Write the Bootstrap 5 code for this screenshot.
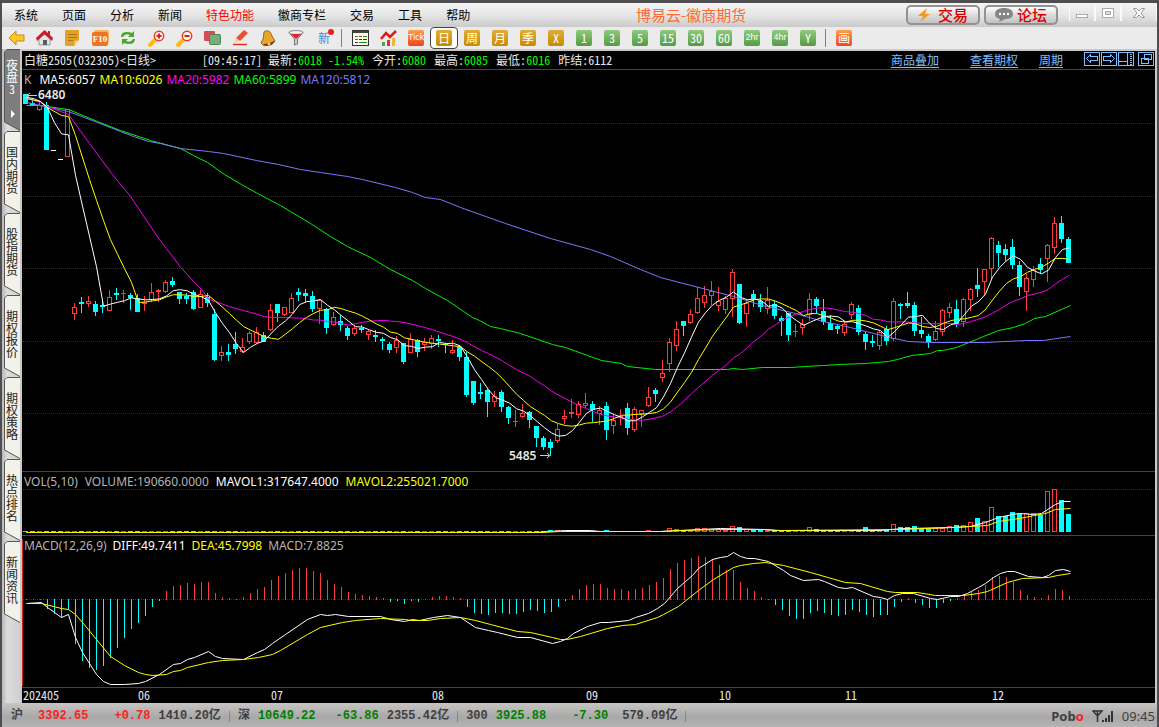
<!DOCTYPE html>
<html lang="zh-CN">
<head>
<meta charset="utf-8">
<meta name="viewport" content="width=device-width, initial-scale=1">
<title>博易云-徽商期货</title>
<link href="https://cdn.jsdelivr.net/npm/bootstrap@5.3.0/dist/css/bootstrap.min.css" rel="stylesheet">
<style>
  body { font: 12px/16px "Noto Sans CJK SC", sans-serif; background: #cdc8c8; }
  button { font: inherit; color: inherit; border: 0; background: none; padding: 0; }
  .hw { font-feature-settings: "hwid"; }
  .frame { border: 2px solid #4e4e50; border-top-width: 3px; border-bottom-width: 2px; }
  .menubar { height: 24px; background: linear-gradient(#f4f4f4, #e6e6e6 50%, #cacaca); color: #000; }
  .menubar .menu-item { padding: 0 12px; }
  .menubar .menu-hot { color: #f00; }
  .app-title { left: 634px; top: 2px; font-size: 15px; line-height: 20px; color: #ff6a33; }
  .pill { width: 74px; height: 20px; border: 2px solid #929292; border-radius: 5px; background: linear-gradient(#fdfdfd, #dcdcdc 50%, #c2c2c2); color: #d80000; font-size: 15px; line-height: 16px; font-weight: 500; }
  .win-buttons { margin-left: 11px; }
  .win { width: 26px; height: 16px; border-left: 1px solid #fafafa; border-right: 1px solid #fafafa; }
  .win-close { width: 36px; }
  .toolbar { height: 22px; background: #ebebeb; }
  .tool { width: 28px; height: 22px; flex: none; }
  .tool.on { background: #fff; border: 1px solid #444; border-radius: 4px; }
  .tool-new { color: #3b8bd8; }
  .tool-new svg { left: 18px; top: 2px; }
  .tool-sep { width: 8px; flex: none; }
  .tool-sep::before { content: ""; display: block; width: 1px; height: 18px; margin: 2px 0 0 3px; background: #808080; }
  .key { width: 16px; height: 16px; border-radius: 2px; color: #fff; font-size: 12px; line-height: 15px; text-align: center; overflow: hidden; }
  .key-long { font-family: "Liberation Sans Narrow", "Liberation Sans", sans-serif; font-size: 9px; }
  .gold { background: linear-gradient(#e0ac38, #c88a00); }
  .green { background: linear-gradient(#8ecb7c, #559a45); }
  .hot { background: linear-gradient(#ffa04a, #ee4420); }
  .main { background: #cdc8c8; }
  .tabs { width: 18px; background: linear-gradient(90deg, #b8b8b8, #dcdcdc 30%, #d0cfd2); }
  .side { width: 16px; height: 82px; margin-left: 2px; color: #222; line-height: 12px; position: relative; }
  .side svg { position: absolute; inset: 0; }
  .side span { position: absolute; left: 2px; top: 15px; width: 12px; }
  .side-on { color: #fff; }
  .side-on span { top: 10px; }
  .chart-area { min-width: 0; background: #000; margin: 2px 2px 0; color: #e8e8e8; }
  .quote { height: 19px; border-bottom: 1px solid #b81414; line-height: 18px; padding-left: 2px; white-space: pre; }
  .quote .q-time { margin-left: 46px; }
  .quote a { color: #7fbfff; text-underline-offset: 2px; margin-right: 21px; }
  .quote a:first-child { margin-right: 31px; }
  .up-g { color: #0f0; }
  .pane { position: relative; border-bottom: 1px solid #b81414; }
  .pane svg { display: block; width: 100%; }
  .legend { position: absolute; left: 2px; top: 1px; font: 12px/18px "Noto Sans", sans-serif; white-space: nowrap; color: #b4b4b4; display: flex; gap: 4px; }
  .pane-v .legend { gap: 7px; }
  .pane-m .legend { gap: 6px; }
  .c-y { color: #ff0; }
  .c-m { color: #f0f; }
  .c-b { color: #7878ff; }
  .pane-k { height: 402px; flex: 1 0 auto; }
  .pane-v { height: 64px; }
  .pane-m { height: 152px; }
  .axis { height: 15px; line-height: 14px; position: relative; }
  .axis span { position: absolute; }
  .status { height: 24px; background: linear-gradient(#c8c4c4, #a8a8a8 60%, #b4b4b4); font: bold 12px/16px "Liberation Mono", "Noto Sans CJK SC", monospace; color: #404040; padding: 2px 2px 0 9px; }
  .status .r { color: #ff2020; }
  .status .g { color: #008000; }
  .status .bar { width: 1px; height: 11px; background: #888; margin: 0 8px; }
  .idx { margin-left: 15px; }
  .chg { margin-left: 26px; }
  .chg-wide { margin-left: 20px; }
  .amt { margin-left: 14px; }
  .brand { font: bold 13px/16px "Noto Sans", sans-serif; }
  .clock { font: 13px/16px "Noto Sans", sans-serif; }
</style>
</head>
<body>
<div class="frame min-vh-100 d-flex flex-column">

  <header class="menubar d-flex align-items-center position-relative">
    <nav class="d-flex" aria-label="主菜单">
      <button class="menu-item">系统</button><button class="menu-item">页面</button><button class="menu-item">分析</button><button class="menu-item">新闻</button><button class="menu-item menu-hot">特色功能</button><button class="menu-item">徽商专栏</button><button class="menu-item">交易</button><button class="menu-item">工具</button><button class="menu-item">帮助</button>
    </nav>
    <div class="app-title position-absolute">博易云-徽商期货</div>
    <div class="d-flex ms-auto align-items-start">
      <button class="pill d-flex align-items-center justify-content-center gap-2 me-1">
        <svg width="12" height="14" viewBox="0 0 12 14"><path d="M9 0 0 8h5L2 14l10-8H7z" fill="#f79a1c"/></svg>交易</button>
      <button class="pill d-flex align-items-center justify-content-center gap-1">
        <svg width="18" height="14" viewBox="0 0 18 14"><path d="M9 0c5 0 9 2 9 6s-4 5-8 5l-6 3 1-3C2 10 0 9 0 6 0 2 4 0 9 0z" fill="#858585"/><circle cx="5" cy="6" r="1.2" fill="#fff"/><circle cx="9" cy="6" r="1.2" fill="#fff"/><circle cx="13" cy="6" r="1.2" fill="#fff"/></svg>论坛</button>
      <div class="d-flex win-buttons">
        <button class="win" aria-label="最小化"><svg class="d-block mx-auto" width="14" height="12" viewBox="0 0 14 12"><rect x="1.5" y="7.5" width="11" height="3" fill="#fff" stroke="#aaa"/></svg></button>
        <button class="win" aria-label="最大化"><svg class="d-block mx-auto" width="14" height="12" viewBox="0 0 14 12"><rect x="1.5" y="1.5" width="11" height="9" fill="#fff" stroke="#aaa"/><rect x="4.5" y="4.5" width="5" height="3" fill="#ddd" stroke="#aaa"/></svg></button>
        <button class="win win-close" aria-label="关闭"><svg class="d-block mx-auto" width="14" height="12" viewBox="0 0 14 12"><path d="M1.5 1.5h3L7 4l2.500-2.500h3L9 6l3.500 4.500h-3L7 8l-2.500 2.500h-3L5 6z" fill="#fff" stroke="#999"/></svg></button>
      </div>
    </div>
  </header>

  <div class="toolbar d-flex" id="toolbar" role="toolbar" aria-label="工具栏">
    <button class="tool d-flex align-items-center justify-content-center" aria-label="后退"><svg width="17" height="16" viewBox="0 0 17 16"><path d="M1 8l7-7v4h8v6H8v4z" fill="#ffc524" stroke="#c98a18"/></svg></button>
    <button class="tool d-flex align-items-center justify-content-center" aria-label="首页"><svg width="17" height="16" viewBox="0 0 17 16"><path d="M3 8v7h11V8L8.500 3z" fill="#e4e4e4" stroke="#999"/><path d="M0 8 8.500 0 12 3V1h2v4l3 3-1 3L8.500 4.500 1 11z" fill="#c5202c"/><path d="M7 15v-5h4v5z" fill="#5b5b62"/></svg></button>
    <button class="tool d-flex align-items-center justify-content-center" aria-label="公告"><svg width="16" height="16" viewBox="0 0 16 16"><path d="M1 1q0-1 1-1h13v10l-5 6H2q-1 0-1-1z" fill="#e3a128"/><path d="M15 10q-1 1-4 1 0 3-1 5z" fill="#ffe0a0"/><path d="M4 4.500h9M4 7.500h9M4 10.500h5" stroke="#b07412"/></svg></button>
    <button class="tool d-flex align-items-center justify-content-center" aria-label="F10"><svg width="17" height="16" viewBox="0 0 17 16"><rect x="2" y="0" width="15" height="13" rx="2" fill="#f7b25e"/><rect x="0" y="2" width="16" height="14" rx="2" fill="#ef7420"/><text x="8" y="12" font-family="Liberation Serif" font-weight="bold" font-size="9" fill="#fff" text-anchor="middle">F10</text></svg></button>
    <button class="tool d-flex align-items-center justify-content-center" aria-label="刷新"><svg width="16" height="16" viewBox="0 0 16 16" fill="#4da52c"><path d="M1 7q0-5 6-5 3 0 5 1l2-2v6H8l2-2q-5-2-7 2zM15 9q0 5-6 5-3 0-5-1l-2 2V9h6l-2 2q5 2 7-2z"/></svg></button>
    <button class="tool d-flex align-items-center justify-content-center" aria-label="放大"><svg width="17" height="17" viewBox="0 0 17 17"><path d="M2 15l5-5" stroke="#ffb818" stroke-width="4" stroke-linecap="round"/><circle cx="11" cy="6" r="4.7" fill="#fff4ee" stroke="#e04328" stroke-width="1.5"/><path d="M8.500 6h5M11 3.500v5" stroke="#d82020" stroke-width="2"/></svg></button>
    <button class="tool d-flex align-items-center justify-content-center" aria-label="缩小"><svg width="17" height="17" viewBox="0 0 17 17"><path d="M2 15l5-5" stroke="#ffb818" stroke-width="4" stroke-linecap="round"/><circle cx="11" cy="6" r="4.7" fill="#fff4ee" stroke="#e04328" stroke-width="1.5"/><path d="M8.500 6h5" stroke="#d82020" stroke-width="2"/></svg></button>
    <button class="tool d-flex align-items-center justify-content-center" aria-label="叠加"><svg width="17" height="16" viewBox="0 0 17 16"><rect x="0" y="1" width="11" height="10" rx="1" fill="#d94b52"/><rect x="5.5" y="4.5" width="11" height="10" rx="1" fill="#79ad79" stroke="#4f844f"/></svg></button>
    <button class="tool d-flex align-items-center justify-content-center" aria-label="画线"><svg width="17" height="16" viewBox="0 0 17 16"><path d="M4 8l8-8 4 3-8 8z" fill="#e8502c"/><path d="M4 8l4 3-6 2z" fill="#f3cfa4"/><path d="M1 14.500h14" stroke="#e03018" stroke-width="1.5"/></svg></button>
    <button class="tool d-flex align-items-center justify-content-center" aria-label="预警"><svg width="16" height="17" viewBox="0 0 16 17"><path d="M4 2c4-3 7 0 8 4l3 5-11 5-3-3q3-4 3-11z" fill="#e6a52e" stroke="#a4621a"/><path d="M3 14q7 0 12-3-2 5-9 5z" fill="#7a3412"/><circle cx="9" cy="14" r="1.5" fill="#ffc860"/></svg></button>
    <button class="tool d-flex align-items-center justify-content-center" aria-label="筛选"><svg width="16" height="16" viewBox="0 0 16 16"><path d="M1 2.500 6.500 9v6l3-1V9L15 2.500z" fill="#ccc" stroke="#777"/><ellipse cx="8" cy="2.5" rx="7" ry="2" fill="#eee" stroke="#888"/><path d="M3 4h10L8 9z" fill="#dc2233"/></svg></button>
    <button class="tool tool-new position-relative">新<svg class="position-absolute" width="6" height="6"><circle cx="3" cy="3" r="3" fill="#f81818"/></svg></button>
    <span class="tool-sep"></span>
    <button class="tool d-flex align-items-center justify-content-center" aria-label="报价"><svg width="17" height="16" viewBox="0 0 17 16"><rect x=".5" y=".5" width="16" height="15" fill="#fffde6" stroke="#333"/><path d="M1 2h15" stroke="#444" stroke-width="2"/><path d="M3 6.500h3M11 6.500h4" stroke="#1c8c1c"/><path d="M7 6.500h3M3 9.500h3" stroke="#d22"/><path d="M7 9.500h3M11 9.500h4M3 12.500h3" stroke="#22a"/><path d="M7 12.500h8" stroke="#1c8c1c"/></svg></button>
    <button class="tool d-flex align-items-center justify-content-center" aria-label="走势"><svg width="17" height="16" viewBox="0 0 17 16"><path d="M1 9l5-6 4 4 6-6" fill="none" stroke="#e01818" stroke-width="2.5"/><path d="M2 16v-4h3v4z" fill="#55a055"/><path d="M7 16v-6h3v6z" fill="#d33"/><path d="M12 16V8h3v8z" fill="#eeb83a"/></svg></button>
  </div>

  <main class="main d-flex flex-grow-1">
    <aside class="tabs flex-shrink-0" id="tabs"></aside>
    <section class="chart-area flex-grow-1 d-flex flex-column">
      <div class="quote hw d-flex"><span>白糖2505(032305)&lt;日线&gt;</span><span class="q-time">[09:45:17] 最新:<span class="up-g">6018 -1.54%</span></span><span class="ms-2">今开:<span class="up-g">6080</span></span><span class="ms-2">最高:<span class="up-g">6085</span></span><span class="ms-2">最低:<span class="up-g">6016</span></span><span class="ms-2">昨结:6112</span>
        <div class="d-flex ms-auto"><a href="#">商品叠加</a><a href="#">查看期权</a><a href="#">周期</a><svg width="71" height="18" viewBox="0 0 71 18" fill="none" stroke="#7fbfff" shape-rendering="crispEdges" role="img" aria-label="窗口工具"><path d="M.5 1.500h15v13H.5zM17.500 1.500h15v13h-15zM34.500 1.500h15v13h-15zM54.500 1.500h15v13h-15z"/><path d="M2.500 7.500l4-4v2h7v4h-7v2zM30.500 7.500l-4-4v2h-7v4h7v2zM34.500 10.500h9M43.500 2v12"/><path d="M47 3v11" stroke-width="2" stroke-dasharray="1 1"/><path d="M60.500 3.500h7v5h-7zM57.500 7.500h7v5h-7z"/></svg></div>
      </div>
      <div class="pane pane-k">
        <svg height="400" id="kPane" aria-label="K线图"></svg>
        <div class="legend"><span class="me-1">K</span><span class="text-white">MA5:6057</span><span class="c-y">MA10:6026</span><span class="c-m">MA20:5982</span><span class="up-g">MA60:5899</span><span class="c-b">MA120:5812</span></div>
      </div>
      <div class="pane pane-v">
        <svg height="63" id="vPane" aria-label="成交量"></svg>
        <div class="legend"><span>VOL(5,10)</span><span>VOLUME:190660.0000</span><span class="text-white">MAVOL1:317647.4000</span><span class="c-y">MAVOL2:255021.7000</span></div>
      </div>
      <div class="pane pane-m">
        <svg height="151" id="mPane" aria-label="MACD"></svg>
        <div class="legend"><span>MACD(12,26,9)</span><span class="text-white">DIFF:49.7411</span><span class="c-y">DEA:45.7998</span><span>MACD:7.8825</span></div>
      </div>
      <div class="axis hw" id="axis"></div>
    </section>
  </main>

  <footer class="status d-flex align-items-center">
    <span>沪</span><span class="r idx">3392.65</span><span class="r chg">+0.78</span><span class="ms-2">1410.20亿</span>
    <span class="bar"></span><span>深</span><span class="g ms-2">10649.22</span><span class="g chg-wide">-63.86</span><span class="ms-2">2355.42亿</span>
    <span class="bar"></span><span>300</span><span class="g ms-2">3925.88</span><span class="g chg">-7.30</span><span class="amt">579.09亿</span><span class="bar"></span>
    <span class="brand ms-auto">Pob<span class="r">o</span></span>
    <svg class="ms-2" width="22" height="13" viewBox="0 0 22 13"><path d="M1 1h9L5.500 6zM5.500 1v11" fill="none" stroke="#333" stroke-width="1.5"/><path d="M11 12v-2M14 12V8M17 12V5M20 12V1" stroke="#333" stroke-width="2"/></svg>
    <span class="clock ms-2">09:45</span>
  </footer>
</div>

<script src="https://cdn.jsdelivr.net/npm/bootstrap@5.3.0/dist/js/bootstrap.bundle.min.js"></script>
<script>
  // Period buttons of the toolbar
  var keys = [['Tick','hot'],['日','gold',1],['周','gold'],['月','gold'],['季','gold'],['X','gold'],['1','green'],['3','green'],['5','green'],['15','green'],['30','green'],['60','green'],['2hr','green'],['4hr','green'],['Y','green'],null,['画','hot']];
  document.getElementById('toolbar').insertAdjacentHTML('beforeend', keys.map(function (k) {
    if (!k) return '<span class="tool-sep"></span>';
    return '<button class="tool d-flex align-items-center justify-content-center' + (k[2] ? ' on' : '') + '"><span class="key hw ' + k[1] + (k[0].length > 2 ? ' key-long' : '') + '">' + k[0] + '</span></button>';
  }).join(''));

  // Side tabs
  document.getElementById('tabs').innerHTML = ['夜盘3','国内期货','股指期货','期权报价','期权策略','热点排名','新闻资讯'].map(function (t, i) {
    var on = i === 0;
    return '<button class="side d-block hw' + (on ? ' side-on' : '') + '"><svg width="16" height="82"><path d="M16 .5H3L.5 3V73L16 81.5z" fill="' + (on ? '#7d7d7d' : '#f2f2ea') + '"/><path d="M16 .5H3L.5 3V73L16 81.5" fill="none" stroke="#555"/>' + (on ? '<path d="M7 61l4 4-4 4z" fill="#fff"/>' : '') + '</svg><span>' + t + '</span></button>';
  }).join('');

  // Candles: high, body top, body bottom, low, c = falling / r = rising / w = flat
  var raw = '94 94 103 103c,98 103 104 105c,101 105 109 110r,102 105 149 149c,150 150 150 150w,159 159 159 159w,109 109 156 156r,303 307 313 319r,297 302 303 312c,296 301 303 306r,301 304 311 315c,299 305 306 312c,290 297 310 310r,288 293 294 299c,290 293 293 302r,293 295 297 309c,294 298 311 311c,296 302 303 310r,283 292 299 301r,289 290 291 301r,280 282 291 292r,277 281 284 286c,292 292 298 303c,293 296 298 303c,290 292 308 309c,290 294 307 307r,293 297 302 306c,309 314 359 360c,346 352 355 360r,344 352 354 360c,332 344 348 353c,338 347 351 352r,331 333 341 343r,327 332 342 343r,332 335 341 341c,304 310 329 330r,304 304 312 321c,307 307 314 315r,293 298 312 312r,288 292 294 300c,289 293 295 301c,291 296 308 311c,299 300 308 323r,308 309 327 333c,312 317 324 325r,315 321 324 330c,326 328 335 339c,325 328 333 335r,325 328 329 332c,329 331 334 339r,330 335 336 341c,337 339 340 349c,342 344 349 352c,336 340 347 352r,343 343 361 363c,333 339 352 352r,339 340 351 356c,338 342 344 350r,335 338 343 348r,335 339 340 346c,343 344 344 352c,340 350 352 353r,346 347 356 360c,352 357 394 396c,381 381 402 404c,383 392 393 398c,389 390 401 416c,391 396 401 406r,390 392 406 411c,406 407 417 423c,410 421 421 426r,404 413 416 417r,411 412 419 427c,426 426 437 446c,436 438 446 449c,439 442 447 455c,424 429 440 442r,410 416 418 423r,399 412 413 417r,401 404 414 417r,393 403 405 407r,401 404 409 421c,406 410 413 424r,402 406 429 439c,415 420 425 433r,409 416 417 424r,403 408 427 434c,407 409 429 431r,410 410 413 426r,387 397 405 406r,388 390 393 401c,360 373 377 381r,338 342 363 371r,321 329 345 350r,321 321 325 335c,309 314 322 323r,287 298 312 313r,286 295 302 307r,281 291 295 304r,287 301 305 310r,296 298 309 313r,269 272 298 316r,284 284 322 323c,300 303 313 326r,290 294 298 306c,294 301 306 311c,287 300 308 313r,301 304 315 318c,316 318 320 335c,313 313 334 340c,324 331 331 336r,319 324 327 334r,293 299 314 320r,297 299 305 312c,299 311 321 324c,315 323 329 329c,324 326 328 333c,321 324 332 335r,302 304 314 318r,305 308 331 334c,332 334 341 349c,335 341 342 346c,330 332 345 349r,326 329 340 344c,298 301 338 340r,303 304 305 318c,292 303 305 307c,302 305 330 335c,317 330 333 337c,334 336 341 347c,321 331 339 340r,309 310 331 335r,303 307 312 317r,300 309 323 326c,298 299 321 326r,288 289 299 310r,268 285 288 296c,269 269 281 295r,237 238 268 279r,241 245 252 266c,244 249 254 260c,239 247 264 268c,261 265 286 295c,274 278 291 310r,266 270 279 286r,258 264 269 273c,244 245 258 281r,217 223 247 253r,216 223 238 242c,237 239 262 262c';
  var k = raw.split(',').map(function (s) {
    var n = s.slice(0, -1).split(' ').map(Number), c = s.slice(-1);
    return { h: n[0], t: n[1], b: n[2], l: n[3], c: c, close: c === 'r' ? n[1] : n[2] };
  });
  var RED = '#ff3c3c', CYAN = '#00ffff', PITCH = 7;
  function cx(i) { return 25 + PITCH * i; }
  function rect(x, y, w, h, f) { return '<rect x="' + x + '" y="' + y + '" width="' + w + '" height="' + h + '" fill="' + f + '"/>'; }
  function box(x, y, w, h) { return '<rect x="' + (x + .5) + '" y="' + (y + .5) + '" width="' + (w - 1) + '" height="' + (h - 1) + '" fill="none" stroke="' + RED + '"/>'; }
  function line(p, c) { return '<polyline transform="translate(.5 .5)" points="' + p + '" fill="none" stroke="' + c + '"/>'; }
  function grid(y, c) { return '<line x1="23" x2="5000" y1="' + (y + .5) + '" y2="' + (y + .5) + '" stroke="' + (c || '#8c0000') + '" stroke-dasharray="1 1"/>'; }
  function ma(n, start) {
    var p = start;
    for (var i = n - 1; i < k.length; i++) {
      var s = 0;
      for (var j = 0; j < n; j++) s += k[i - j].close;
      p += ' ' + (cx(i) + 1) + ',' + (s / n).toFixed(1);
    }
    return p;
  }

  // Price pane
  var s = [123, 196, 268, 341, 413].map(function (y) { return grid(y); }).join('');
  k.forEach(function (d, i) {
    var x = cx(i), h = d.b - d.t + 1;
    if (d.c === 'w') { s += rect(x - 2, d.t, 5, 1, '#fff'); return; }
    if (d.c === 'c') s += rect(x, d.h, 1, d.l - d.h + 1, CYAN) + rect(x - 2, d.t, 5, h, CYAN);
    else {
      s += rect(x, d.h, 1, d.t - d.h, RED) + rect(x, d.b, 1, d.l - d.b + 1, RED);
      s += h > 2 ? box(x - 2, d.t, 5, h) : rect(x - 2, d.t, 5, h, RED);
    }
  });
  s = '<g shape-rendering="crispEdges">' + s + '</g>';
  s += line('26,105 40,105 68,109 97,121 120,130 150,140 180,148 193,155 207,162 224,174 241,184 257,193 280,205 290,211 310,223 330,236 347,246 370,257 390,269 412,280 425,288 447,300 472,317 479,320 490,326 500,328 520,333 552,344 565,347 601,360 621,363 627,366 655,369 727,369 733,368 742,369 762,367 790,367 805,366 823,365 838,364 865,363 888,361 897,359 911,355 930,353 937,350 942,350 956,347 976,339 983,336 998,330 1013,327 1025,323 1034,318 1045,316 1070,305', '#00f000');
  s += line('26,102 68,111 97,122 120,131 133,136 148,141 160,143 180,148 208,151 223,153 256,160 278,164 300,169 320,172 347,176 362,179 395,187 412,192 425,197 440,199 460,207 505,223 550,238 590,249 610,256 640,269 660,277 733,296 762,305 795,313 823,321 850,327 889,337 908,341 930,342 985,342 1025,340 1043,340 1070,336', '#7878ff');
  s += line(ma(20, '26,98 40,102 47,106 68,114 89,143 112,174 130,196'), '#f000f0');
  s += line(ma(10, '26,98 40,101 47,107 61,115 68,116 75,135'), '#ffff00');
  s += line(ma(5, '26,97 33,98 40,101 47,107'), '#ffffff');
  s += '<g fill="#e8e8e8" font-family="Noto Sans" font-weight="600" font-size="12"><text x="38" y="99">6480</text><text x="509" y="460">5485</text></g>';
  s += '<path d="M28 95.500h9M30 93l-3 2.500 3 2.500M540 455.500h9M547 453l3 2.500-3 2.500" fill="none" stroke="#ccc"/>';
  document.getElementById('kPane').innerHTML = '<g transform="translate(-22 -70)">' + s + '</g>';

  // Volume pane: tops of the bars from bar 92 on
  var vt = [528,529,530,530,528,528,529,529,530,526,527,529,530,530,530,530,531,530,530,530,527,529,530,530,530,530,530,530,527,530,530,530,524,527,527,526,529,529,528,528,526,525,525,522,518,521,507,516,516,512,514,513,513,515,491,489,500,514];
  s = grid(489);
  k.forEach(function (d, i) {
    var top = i >= 92 ? vt[i - 92] : ([75, 76, 83, 89].indexOf(i) >= 0 ? 530 : 531), x = cx(i) - 2, h = 532 - top;
    s += d.c === 'r' && h > 2 ? box(x, top, 5, h) : rect(x, top, 5, i < 92 ? 1 : h, d.c === 'r' ? RED : CYAN);
  });
  s = '<g shape-rendering="crispEdges">' + s + '</g>';
  s += line('26,532 535,532 550,531 565,530 590,530 600,531 660,531 720,528 765,529 775,530 880,530 890,529 905,528 955,527 970,526 977,524 985,522 998,517 1012,514 1019,513 1033,514 1041,513 1055,504 1062,501 1070,501', '#fff');
  s += line('26,532 540,532 560,531 660,531 677,530 725,529 765,529 780,530 900,529 950,527 987,525 998,521 1019,518 1034,515 1045,513 1055,509 1070,508', '#ff0');
  document.getElementById('vPane').innerHTML = '<g transform="translate(-22 -472)">' + s + '</g>';

  // MACD pane: end of each histogram bar, zero line at 599
  var mh = [599,599,599,608,613,617,609,643,660,667,669,665,657,647,637,628,622,615,606,600,591,586,585,583,584,582,582,593,597,598,599,597,593,589,587,580,576,573,570,568,568,571,573,580,584,587,592,594,595,596,597,598,601,600,603,600,601,599,597,596,596,597,598,606,612,613,614,612,612,613,613,611,609,610,612,611,606,600,595,589,585,584,584,588,589,589,591,589,588,585,582,578,569,563,560,558,556,557,559,565,570,570,582,588,591,597,599,604,609,615,618,618,612,610,612,614,615,614,609,611,614,616,614,614,606,601,598,602,604,607,607,602,600,598,595,592,590,585,577,576,577,582,590,595,597,598,595,589,590,596];
  s = grid(599, '#b00000') + rect(22, 539, 1, 147, '#d02020');
  mh.forEach(function (y, i) {
    s += y > 599 ? rect(cx(i) + 1, 599, 1, y - 598, CYAN) : rect(cx(i) + 1, y, 1, 600 - y, RED);
  });
  s = '<g shape-rendering="crispEdges">' + s + '</g>';
  s += line('26,603 41,602 47,607 61,617 68,614 75,637 82,652 96,674 103,681 110,684 124,684 138,683 145,681 159,674 173,664 180,663 187,659 194,657 208,651 215,656 222,658 243,659 257,652 264,649 272,643 285,634 307,619 320,614 327,615 335,614 348,616 380,616 390,619 404,621 412,619 419,620 433,617 447,615 460,617 475,627 488,630 497,632 517,637 530,637 552,643 560,641 567,638 573,633 587,626 600,622 608,622 628,620 635,617 648,613 657,608 664,603 677,588 692,575 698,568 712,559 720,557 727,556 733,552 740,556 747,558 754,558 768,561 783,570 790,575 803,580 818,579 824,581 838,587 845,588 852,587 873,596 880,597 887,599 894,595 902,593 913,593 930,598 937,599 950,596 958,596 967,593 978,587 985,583 993,577 1000,573 1007,571 1014,571 1028,576 1042,577 1048,575 1055,570 1063,569 1070,571', '#ffffff');
  s += line('26,603 41,603 61,608 68,609 75,614 82,622 96,639 110,656 124,665 138,672 145,674 152,675 166,674 173,671 180,670 187,667 208,662 222,660 243,659 258,657 272,654 280,650 307,634 320,627 342,622 355,620 380,618 405,619 410,620 427,620 440,618 460,617 475,620 490,624 517,631 530,632 552,637 560,639 567,639 580,636 607,628 622,625 635,624 657,617 663,614 678,606 698,590 713,579 733,567 740,565 753,563 765,562 783,565 810,572 845,582 860,583 887,591 895,592 917,592 935,595 963,595 978,593 987,591 1007,582 1022,578 1048,577 1057,575 1070,573', '#ffff00');
  document.getElementById('mPane').innerHTML = '<g transform="translate(-22 -536)">' + s + '</g>';

  // Month labels, placed at the bar that opens each month
  document.getElementById('axis').innerHTML = [['202405', 1], ['06', 116], ['07', 249], ['08', 410], ['09', 564], ['10', 697], ['11', 823], ['12', 970]].map(function (m) {
    return '<span style="left:' + m[1] + 'px">' + m[0] + '</span>';
  }).join('');
</script>
</body>
</html>
